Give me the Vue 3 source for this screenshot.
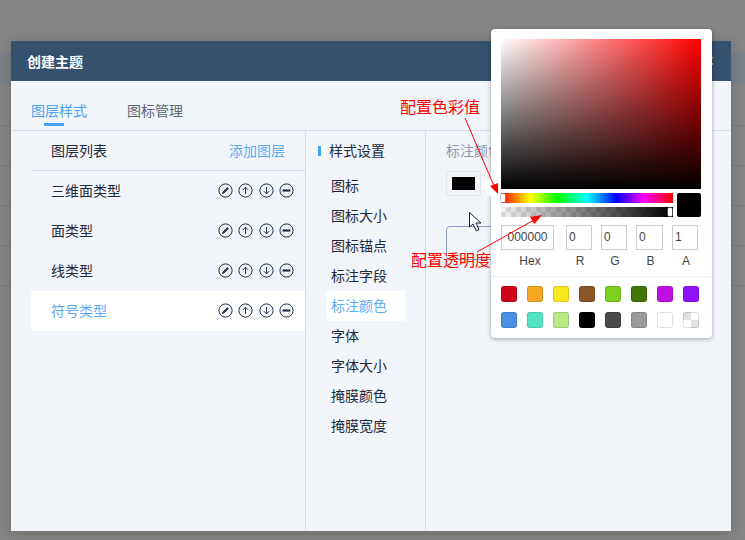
<script setup>
const layers = [
  { name: '三维面类型' },
  { name: '面类型' },
  { name: '线类型' },
  { name: '符号类型', active: true }
]
const settings = ['图标', '图标大小', '图标锚点', '标注字段', '标注颜色', '字体', '字体大小', '掩膜颜色', '掩膜宽度']
const fields = [
  { label: 'Hex', value: '000000', cls: 'hex' },
  { label: 'R', value: '0', cls: 'r' },
  { label: 'G', value: '0', cls: 'g' },
  { label: 'B', value: '0', cls: 'b' },
  { label: 'A', value: '1', cls: 'a' }
]
const swatches = [
  '#d0021b', '#f5a623', '#f8e71c', '#8b572a', '#7ed321', '#417505', '#bd10e0', '#9013fe',
  '#4a90e2', '#50e3c2', '#b8e986', '#000000', '#4a4a4a', '#9b9b9b', '#ffffff', 'transparent'
]
</script>

<template>
  <div class="page">
    <div class="bands">
      <div class="band-head"></div>
      <div v-for="n in 5" :key="n" class="band-row"></div>
    </div>

    <div class="dialog">
      <div class="dialog-head">
        <span>创建主题</span>
        <span class="close">×</span>
      </div>
      <div class="tabs">
        <div class="tab on">图层样式</div>
        <div class="tab">图标管理</div>
      </div>
      <div class="body">
        <div class="col-list">
          <div class="list-head">
            <span>图层列表</span>
            <span class="add">添加图层</span>
          </div>
          <div v-for="l in layers" :key="l.name" class="layer" :class="{ active: l.active }">
            <span>{{ l.name }}</span>
            <div class="tools">
              <svg viewBox="0 0 15 15" class="tool">
                <circle cx="7.5" cy="7.5" r="6.6" />
                <path d="M4 11l.5-2 4.8-4.8 1.5 1.5-4.8 4.8z" class="solid" />
              </svg>
              <svg viewBox="0 0 15 15" class="tool">
                <circle cx="7.5" cy="7.5" r="6.6" />
                <path d="M7.5 11V4.2M4.9 6.8l2.6-2.6 2.6 2.6" />
              </svg>
              <svg viewBox="0 0 15 15" class="tool">
                <circle cx="7.5" cy="7.5" r="6.6" />
                <path d="M7.5 4v6.8M4.9 8.2l2.6 2.6 2.6-2.6" />
              </svg>
              <svg viewBox="0 0 15 15" class="tool">
                <circle cx="7.5" cy="7.5" r="6.6" />
                <path d="M3.6 7.5h7.8" class="thick" />
              </svg>
            </div>
          </div>
        </div>

        <div class="col-set">
          <div class="set-head">样式设置</div>
          <div v-for="s in settings" :key="s" class="set-item" :class="{ active: s === '标注颜色' }">{{ s }}</div>
        </div>

        <div class="col-main">
          <div class="main-label">标注颜色</div>
          <div class="color-btn"><i></i></div>
          <div class="outline-box"></div>
        </div>
      </div>
    </div>

    <div class="picker">
      <div class="sat"></div>
      <div class="sliders">
        <div class="bars">
          <div class="hue"><b class="thumb-l"></b></div>
          <div class="alpha"><b class="thumb-r"></b></div>
        </div>
        <div class="preview"></div>
      </div>
      <div class="fields">
        <div v-for="f in fields" :key="f.label" class="field" :class="f.cls">
          <div class="input">{{ f.value }}</div>
          <div class="lbl">{{ f.label }}</div>
        </div>
      </div>
      <div class="swatches">
        <span
          v-for="(c, i) in swatches"
          :key="i"
          class="swatch"
          :class="{ clear: c === 'transparent', white: c === '#ffffff' }"
          :style="{ backgroundColor: c }"
        ></span>
      </div>
    </div>

    <div class="note note-1">配置色彩值</div>
    <div class="note note-2">配置透明度</div>

    <svg class="overlay" viewBox="0 0 745 540">
      <path d="M465 118 L494 186" stroke="#f00" stroke-width="1" fill="none" />
      <path d="M498 194 L490 186 L498 183 Z" fill="#f00" />
      <path d="M477 252 L534 220" stroke="#f00" stroke-width="1" fill="none" />
      <path d="M542 215 L530 217 L534.5 224 Z" fill="#f00" />
      <path d="M469.5 212.5 V227 L473 224 L476.5 231 L479 229.5 L476 223 L481 223 Z" fill="#fff" stroke="#1a2030" stroke-width="1" stroke-linejoin="round" />
    </svg>
  </div>
</template>

<style>
html, body { margin: 0; }
</style>

<style scoped>
.page {
  position: relative;
  width: 745px;
  height: 540px;
  overflow: hidden;
  background: #858585;
  font-family: "Liberation Sans", "Noto Sans CJK SC", sans-serif;
}

.bands {
  padding-top: 53px;
}

.band-head {
  height: 32px;
  margin-bottom: 1px;
  background: #7b8188;
}

.band-row {
  height: 40px;
  box-sizing: border-box;
  border-bottom: 1px solid #7a7a7a;
}

.dialog {
  position: absolute;
  left: 11px;
  top: 41px;
  width: 720px;
  height: 490px;
  background: #f2f5f9;
  box-shadow: 0 2px 12px rgba(0, 0, 0, 0.2);
  display: flex;
  flex-direction: column;
}

.dialog-head {
  height: 40px;
  flex: none;
  background: #34516f;
  color: #fff;
  font-size: 14px;
  font-weight: 700;
  display: flex;
  align-items: center;
  justify-content: space-between;
  padding: 0 17px 0 16px;
}

.close {
  font-weight: 400;
  font-size: 18px;
}

.tabs {
  height: 50px;
  flex: none;
  display: flex;
  gap: 40px;
  padding-left: 20px;
  box-sizing: border-box;
  border-bottom: 1px solid #d3deed;
  font-size: 14px;
  color: #5d6675;
  align-items: flex-end;
}

.tab {
  position: relative;
  height: 29px;
  line-height: 20px;
}

.tab.on {
  color: #4da1f5;
}

.tab.on::after {
  content: "";
  position: absolute;
  left: 13px;
  bottom: 4px;
  width: 20px;
  height: 3px;
  background: #3fa2f2;
}

.body {
  flex: 1;
  display: flex;
}

.col-list {
  width: 295px;
  flex: none;
  padding-left: 20px;
  box-sizing: border-box;
  border-right: 1px solid #d3deed;
}

.list-head {
  height: 40px;
  display: flex;
  align-items: center;
  justify-content: space-between;
  padding: 0 20px 1px;
  box-sizing: border-box;
  border-bottom: 1px solid #d3deed;
  font-size: 14px;
  color: #1f2a3c;
}

.add {
  color: #5dabf4;
}

.layer {
  height: 40px;
  box-sizing: border-box;
  display: flex;
  align-items: center;
  justify-content: space-between;
  padding: 0 11px 2px 20px;
  font-size: 14px;
  color: #1f2a3c;
}

.layer.active {
  background: #fff;
  color: #5dabf4;
}

.tools {
  display: flex;
  gap: 5.33px;
}

.tool {
  width: 15px;
  height: 15px;
  fill: none;
  stroke: #1d2c4c;
  stroke-width: 1;
}

.tool .solid {
  fill: #1d2c4c;
  stroke: none;
}

.tool .thick {
  stroke-width: 2.2;
}

.col-set {
  width: 120px;
  flex: none;
  box-sizing: border-box;
  padding-left: 20px;
  border-right: 1px solid #d3deed;
}

.set-head {
  height: 40px;
  box-sizing: border-box;
  display: flex;
  align-items: center;
  position: relative;
  padding: 0 0 2px 3px;
  font-size: 14px;
  color: #1f2a3c;
}

.set-head::before {
  content: "";
  position: absolute;
  left: -8px;
  top: 15px;
  width: 3px;
  height: 10px;
  background: #3fa2f2;
}

.set-item {
  height: 30px;
  line-height: 30px;
  width: 79px;
  padding-left: 5px;
  box-sizing: border-box;
  font-size: 14px;
  color: #1f2a3c;
}

.set-item.active {
  background: #fff;
  color: #5dabf4;
}

.col-main {
  flex: 1;
  padding: 10px 0 0 20px;
}

.main-label {
  font-size: 14px;
  line-height: 20px;
  color: #8e97ab;
}

.color-btn {
  width: 35px;
  height: 25px;
  margin-top: 10px;
  padding: 5px;
  box-sizing: border-box;
  border: 1px solid #e3e6ea;
  display: flex;
}

.color-btn i {
  flex: 1;
  background: #000;
}

.outline-box {
  width: 120px;
  height: 34px;
  margin-top: 30px;
  border: 1px solid #8c9cc4;
  border-radius: 4px;
  box-sizing: border-box;
}

.picker {
  position: absolute;
  left: 491px;
  top: 29px;
  width: 221px;
  height: 309px;
  box-sizing: border-box;
  padding: 10px 11px 0 10px;
  background: #fff;
  border-radius: 4px;
  box-shadow: 0 1px 4px rgba(0, 0, 0, 0.35);
  z-index: 2;
}

.picker::before {
  content: "";
  position: absolute;
  left: -10px;
  top: 148px;
  width: 0;
  height: 0;
  border: 10px solid transparent;
  border-left: 0;
  border-right-color: #fff;
}

.sat {
  height: 150px;
  background:
    linear-gradient(to top, #000, rgba(0, 0, 0, 0)),
    linear-gradient(to right, #fff, #f00);
}

.sliders {
  display: flex;
  justify-content: space-between;
  margin-top: 4px;
}

.bars {
  width: 172px;
}

.hue {
  position: relative;
  height: 10px;
  margin-bottom: 4px;
  background: linear-gradient(to right, #f00 0%, #ff0 17%, #0f0 33%, #0ff 50%, #00f 67%, #f0f 83%, #f00 100%);
}

.alpha {
  position: relative;
  height: 10px;
  background:
    linear-gradient(to right, rgba(0, 0, 0, 0), #000),
    repeating-conic-gradient(#dcdcdc 0 25%, #f4f4f4 0 50%) 0 0 / 10px 10px;
}

.thumb-l,
.thumb-r {
  position: absolute;
  top: 1px;
  width: 4px;
  height: 8px;
  background: #fff;
  box-shadow: 0 0 0 0.5px #999;
  border-radius: 1px;
}

.thumb-l { left: 0; }
.thumb-r { right: 1px; }

.preview {
  width: 24px;
  height: 24px;
  background: #000;
  border-radius: 2px;
}

.fields {
  display: flex;
  margin-top: 8px;
}

.field {
  text-align: center;
  font-size: 12px;
  color: #444;
}

.hex { width: 53px; margin-right: 12px; }
.r, .g { width: 26px; margin-right: 9px; }
.b { width: 27px; margin-right: 9px; }
.a { width: 26px; }

.input {
  height: 25px;
  line-height: 23px;
  border: 1px solid #ccc;
  box-sizing: border-box;
  padding-left: 2px;
  text-align: left;
  font-size: 12px;
  color: #444;
}

.hex .input {
  text-align: center;
  padding-left: 0;
}

.lbl {
  margin-top: 4px;
  padding-left: 2px;
  line-height: 15px;
}

.hex .lbl {
  padding-left: 5px;
}

.swatches {
  display: grid;
  grid-template-columns: repeat(8, 16px);
  column-gap: 10px;
  row-gap: 10px;
  margin: 7px -11px 0 -10px;
  padding: 9px 10px 0;
  border-top: 1px solid #eee;
}

.swatch {
  width: 16px;
  height: 16px;
  border-radius: 3px;
  box-sizing: border-box;
  box-shadow: inset 0 0 0 1px rgba(0, 0, 0, 0.13);
}

.swatch.clear {
  background-image: repeating-conic-gradient(#fff 0 25%, #e2e2e2 0 50%);
  background-size: 16px 16px;
}

.note {
  position: absolute;
  z-index: 3;
  color: #f00;
  font-size: 16px;
  line-height: 20px;
  white-space: nowrap;
}

.note-1 { left: 400px; top: 98px; }
.note-2 { left: 411px; top: 251px; }

.overlay {
  position: absolute;
  left: 0;
  top: 0;
  width: 745px;
  height: 540px;
  z-index: 3;
  pointer-events: none;
}
</style>
